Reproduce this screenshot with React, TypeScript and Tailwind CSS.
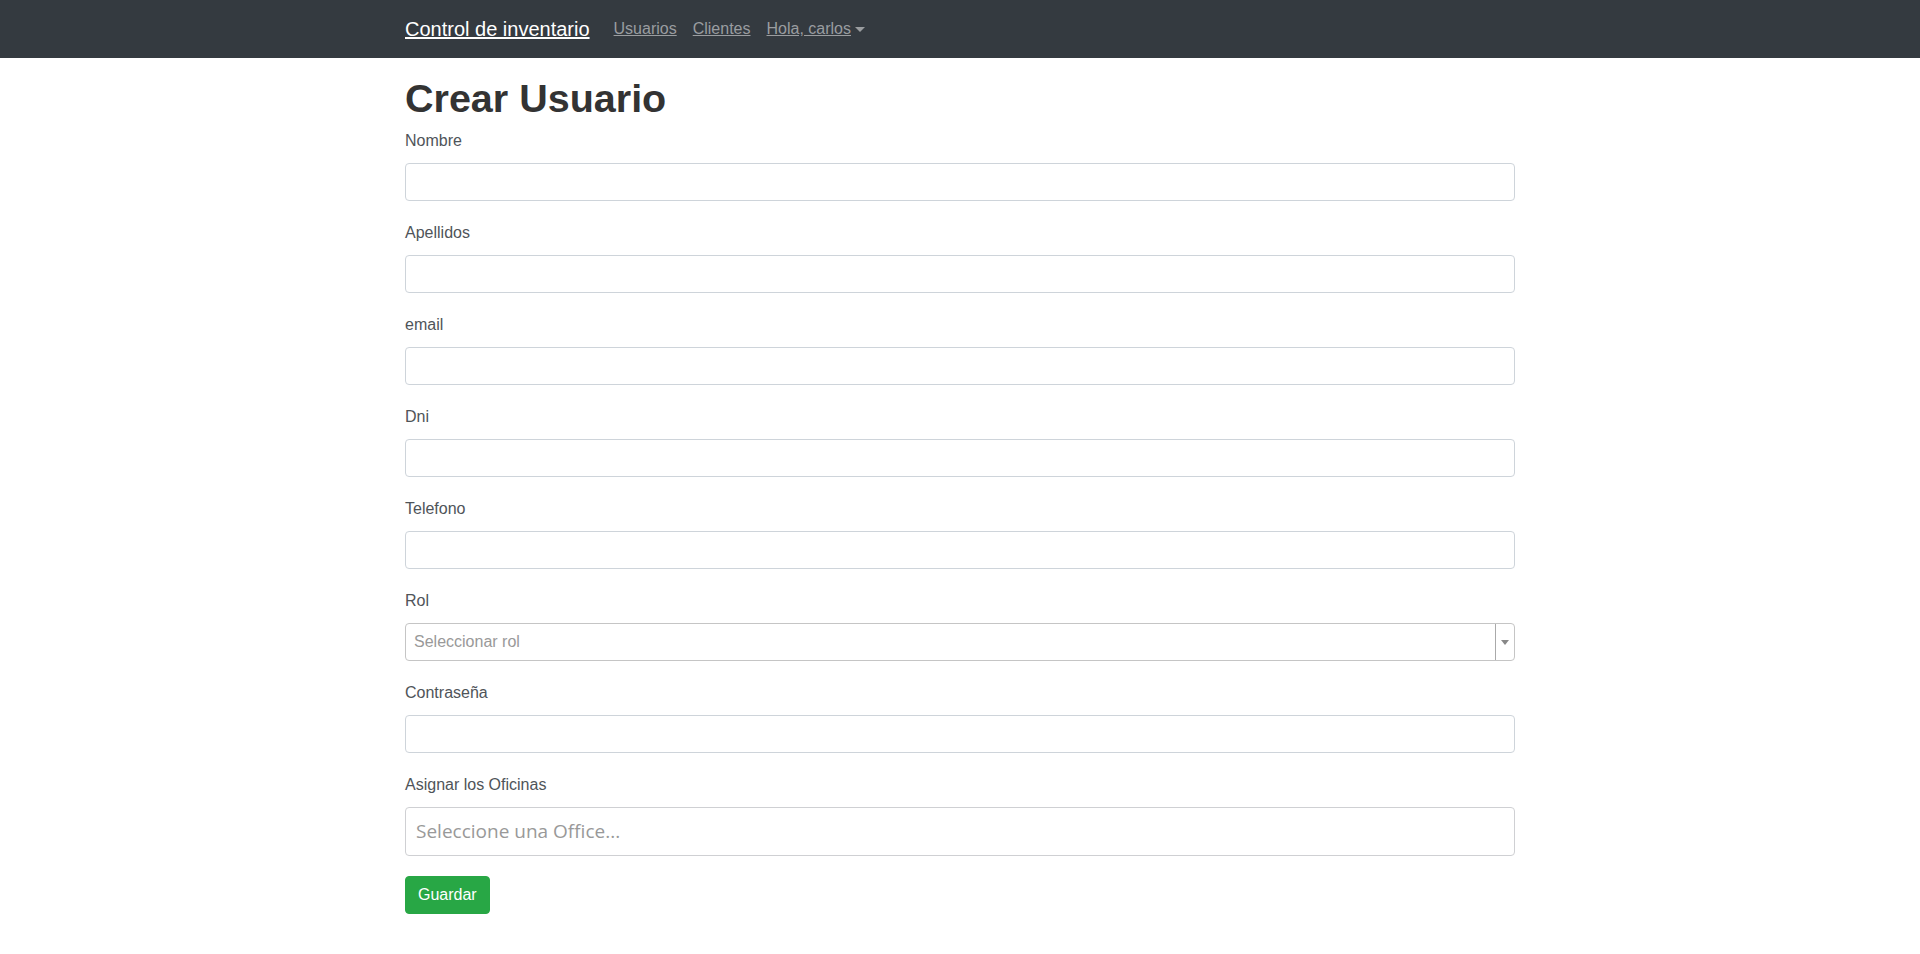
import { useState } from "react";

const fields = ["Nombre", "Apellidos", "email", "Dni", "Telefono"];

function Label({ children }: { children: React.ReactNode }) {
  return <label className="block h-6 mb-[10px] text-base leading-6 text-[#4f5459]">{children}</label>;
}

function TextInput() {
  return (
    <input
      type="text"
      className="block w-full h-[38px] px-3 border border-[#ced4da] rounded bg-white text-base text-[#495057] outline-none focus:border-[#80bdff]"
    />
  );
}

export default function App() {
  const [rol, setRol] = useState("");

  return (
    <main className="min-h-screen bg-white font-['Liberation_Sans',Arial,sans-serif] text-[#212529]">
      {/* navbar */}
      <nav className="h-[58px] bg-[#343a40]">
        <div className="w-[1110px] mx-auto h-full flex items-center">
          <a href="#" className="text-xl text-white underline mr-4 leading-[30px]">
            Control de inventario
          </a>
          <a href="#" className="px-2 text-base text-[#9a9da0] underline leading-6">
            Usuarios
          </a>
          <a href="#" className="px-2 text-base text-[#9a9da0] underline leading-6">
            Clientes
          </a>
          <a href="#" className="px-2 text-base text-[#9a9da0] leading-6 flex items-center">
            <span className="underline">Hola, carlos</span>
            <span className="ml-[4px] w-0 h-0 border-x-[5px] border-x-transparent border-t-[5px] border-t-[#9a9da0]" />
          </a>
        </div>
      </nav>

      {/* form */}
      <div className="w-[1110px] mx-auto">
        <h1 className="mt-[16px] mb-[7px] text-[39.5px] leading-[48px] font-bold text-[#333]">Crear Usuario</h1>

        <form onSubmit={(e) => e.preventDefault()}>
          {fields.map((f) => (
            <div key={f} className="mb-5">
              <Label>{f}</Label>
              <TextInput />
            </div>
          ))}

          <div className="mb-5">
            <Label>Rol</Label>
            <div className="relative flex h-[38px] border border-[#c5c5c5] rounded bg-white">
              <select
                value={rol}
                onChange={(e) => setRol(e.target.value)}
                className="flex-1 appearance-none bg-transparent pl-2 text-base text-[#999] outline-none"
              >
                <option value="">Seleccionar rol</option>
                <option value="admin">Administrador</option>
                <option value="user">Usuario</option>
              </select>
              <div className="w-[19px] border-l border-[#aaa] flex items-center justify-center">
                <span className="w-0 h-0 border-x-[4px] border-x-transparent border-t-[5px] border-t-[#888]" />
              </div>
            </div>
          </div>

          <div className="mb-5">
            <Label>Contraseña</Label>
            <input
              type="password"
              className="block w-full h-[38px] px-3 border border-[#ced4da] rounded bg-white text-base outline-none"
            />
          </div>

          <div className="mb-5">
            <Label>Asignar los Oficinas</Label>
            <div className="h-[49px] border border-[#cfd0d3] rounded bg-white flex items-center pl-[10px]">
              <span className="font-['Open_Sans',sans-serif] text-[19px] text-[#999]">Seleccione una Office...</span>
            </div>
          </div>

          <button
            type="submit"
            className="h-[38px] px-3 rounded bg-[#28a745] text-white text-base border border-[#28a745] hover:bg-[#218838]"
          >
            Guardar
          </button>
        </form>
      </div>
    </main>
  );
}
